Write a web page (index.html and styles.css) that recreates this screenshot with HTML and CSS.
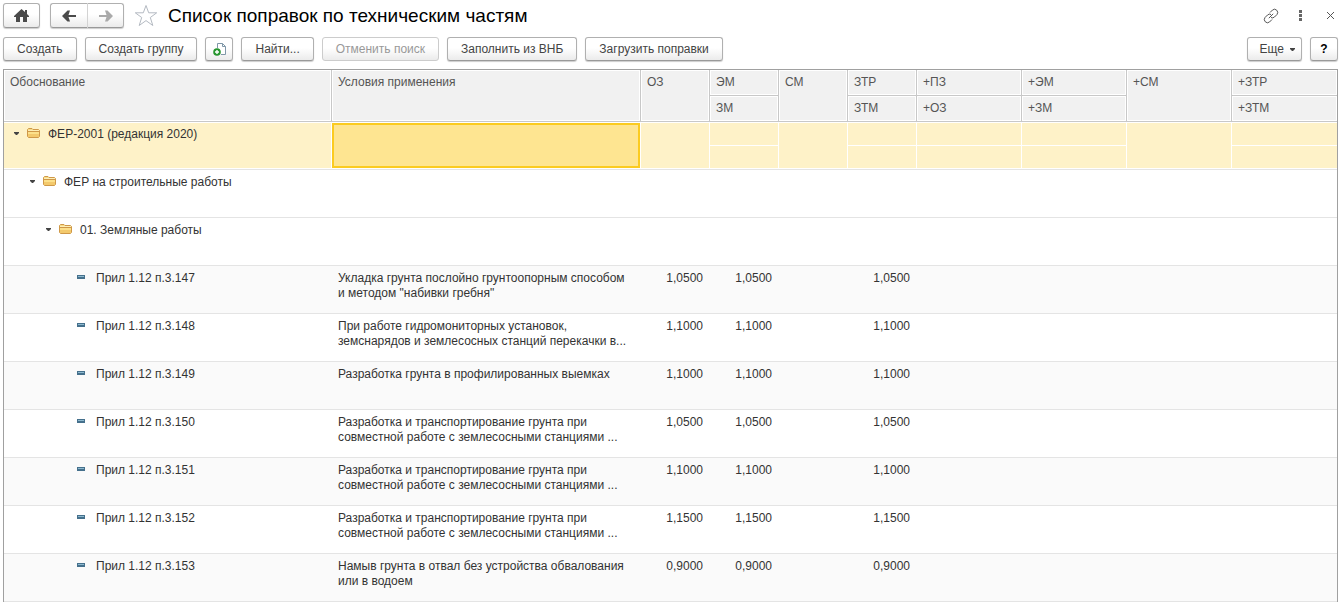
FILE: index.html
```html
<!DOCTYPE html>
<html lang="ru">
<head>
<meta charset="utf-8">
<title>Список поправок по техническим частям</title>
<link rel="stylesheet" href="styles.css">
</head>
<body>
<svg width="0" height="0" class="sprite" aria-hidden="true">
  <symbol id="folder" viewBox="0 0 13 11">
    <path d="M.5 9.500V2.500l1-1H5l1 1h5.500l1 1v6l-1 1h-10z" fill="#f8dc86" stroke="#cf9848"/>
    <path d="M1 4h11v1H1z" fill="#cf9848"/>
    <path d="M1 3h11v1H1z" fill="#fdeeb5"/>
    <path d="M1 5h11v2H1z" fill="#fce08a"/>
    <path d="M1 7h11v3H1z" fill="#f3c96c"/>
  </symbol>
  <symbol id="item" viewBox="0 0 8 4">
    <path d="M0 0h8v4H0z" fill="#45708c"/>
    <path d="M1 1h6v1H1z" fill="#8db9cf"/>
  </symbol>
  <symbol id="caret" viewBox="0 0 5 3"><path d="M0 0h5v1L3 3H2L0 1z" fill="#444"/></symbol>
</svg>

<header class="titlebar">
  <button class="btn nav" type="button" aria-label="Домой">
    <svg width="15" height="13" viewBox="0 0 15 13"><path d="M7.500 0 0 7v1h2v5h4V8h3v5h4V8h2V7l-2-2V1h-2v2z" fill="#4a4a4a"/></svg>
  </button>
  <div class="history">
    <button class="btn nav" type="button" aria-label="Назад">
      <svg width="14" height="12" viewBox="0 0 14 12"><path d="M0 6 5.500.5H8L6.500 5H14v2H6.500L8 11.500H5.500z" fill="#4a4a4a"/></svg>
    </button>
    <button class="btn nav" type="button" aria-label="Вперед">
      <svg width="14" height="12" viewBox="0 0 14 12"><path d="M14 6 8.500.5H6L7.500 5H0v2h7.500L6 11.500h2.500z" fill="#aaa"/></svg>
    </button>
  </div>
  <button class="icon" type="button" aria-label="В избранное">
    <svg width="24" height="23" viewBox="0 0 24 23"><path d="m12 1.500 2.700 7.300h8l-6.400 4.700 2.500 8-6.800-4.900-6.800 4.900 2.500-8-6.400-4.700h8z" fill="#fff" stroke="#b4bac2"/></svg>
  </button>
  <h1>Список поправок по техническим частям</h1>
  <div class="window-tools">
    <button class="icon link" type="button" aria-label="Ссылка">
      <svg width="16" height="16" viewBox="0 0 16 16"><path d="M7 4.500 9.500 2q2.200-1.800 4.200.2t.3 4.300L11.500 9q-1.800 1.600-3.500.5M9 11.500 6.500 14q-2.200 1.800-4.200-.2T2 9.500L4.500 7q1.800-1.600 3.500-.5M5.800 10.200l4.400-4.400" fill="none" stroke="#555"/></svg>
    </button>
    <button class="icon" type="button" aria-label="Меню">
      <svg width="3" height="11" viewBox="0 0 3 11"><path d="M0 0h3v3H0zM0 4h3v3H0zM0 8h3v3H0z" fill="#666"/></svg>
    </button>
    <button class="icon" type="button" aria-label="Закрыть">
      <svg width="7" height="7" viewBox="0 0 7 7"><path d="m0 0 7 7M7 0 0 7" stroke="#555"/></svg>
    </button>
  </div>
</header>

<div class="toolbar">
  <button class="btn" type="button">Создать</button>
  <button class="btn" type="button">Создать группу</button>
  <button class="btn square" type="button" aria-label="Создать копированием">
    <svg width="13" height="14" viewBox="0 0 13 14"><path d="M4.500 6V1.500h5l3 3v8H8M9.500 1.500v3h3" fill="#fff" stroke="#7f97a8"/><circle cx="4" cy="10" r="3.800" fill="#27962f"/><path d="M4 8v4M2 10h4" stroke="#fff" stroke-width="1.400"/></svg>
  </button>
  <button class="btn" type="button">Найти...</button>
  <button class="btn" type="button" disabled>Отменить поиск</button>
  <button class="btn" type="button">Заполнить из ВНБ</button>
  <button class="btn" type="button">Загрузить поправки</button>
  <button class="btn more" type="button">Еще <svg width="5" height="3"><use href="#caret"/></svg></button>
  <button class="btn square help" type="button">?</button>
</div>

<table class="grid">
  <colgroup>
    <col class="c-base"><col>
    <col class="c-num"><col class="c-num"><col class="c-num"><col class="c-num">
    <col class="c-add"><col class="c-add"><col class="c-add"><col class="c-add">
  </colgroup>
  <thead>
    <tr>
      <th rowspan="2">Обоснование</th><th rowspan="2">Условия применения</th><th rowspan="2">ОЗ</th><th>ЭМ</th><th rowspan="2">СМ</th><th>ЗТР</th><th>+ПЗ</th><th>+ЭМ</th><th rowspan="2">+СМ</th><th>+ЗТР</th>
    </tr>
    <tr><th>ЗМ</th><th>ЗТМ</th><th>+ОЗ</th><th>+ЗМ</th><th>+ЗТМ</th></tr>
  </thead>
  <tbody>
    <tr class="current">
      <td><div class="fill node"><svg class="caret" width="5" height="3"><use href="#caret"/></svg><svg width="13" height="11"><use href="#folder"/></svg>ФЕР-2001 (редакция 2020)</div></td>
      <td><div class="fill focus"></div></td>
      <td><div class="fill"></div></td>
      <td><div class="half"></div><div class="half"></div></td>
      <td><div class="fill"></div></td>
      <td><div class="half"></div><div class="half"></div></td>
      <td><div class="half"></div><div class="half"></div></td>
      <td><div class="half"></div><div class="half"></div></td>
      <td><div class="fill"></div></td>
      <td><div class="half"></div><div class="half"></div></td>
    </tr>
    <tr><td><div class="node level-2"><svg class="caret" width="5" height="3"><use href="#caret"/></svg><svg width="13" height="11"><use href="#folder"/></svg>ФЕР на строительные работы</div></td><td></td><td></td><td></td><td></td><td></td><td></td><td></td><td></td><td></td></tr>
    <tr><td><div class="node level-3"><svg class="caret" width="5" height="3"><use href="#caret"/></svg><svg width="13" height="11"><use href="#folder"/></svg>01. Земляные работы</div></td><td></td><td></td><td></td><td></td><td></td><td></td><td></td><td></td><td></td></tr>
    <tr class="alt"><td><div class="leaf"><svg width="8" height="4"><use href="#item"/></svg>Прил 1.12 п.3.147</div></td><td>Укладка грунта послойно грунтоопорным способом и методом "набивки гребня"</td><td class="num">1,0500</td><td class="num">1,0500</td><td></td><td class="num">1,0500</td><td></td><td></td><td></td><td></td></tr>
    <tr><td><div class="leaf"><svg width="8" height="4"><use href="#item"/></svg>Прил 1.12 п.3.148</div></td><td>При работе гидромониторных установок, земснарядов и землесосных станций перекачки в...</td><td class="num">1,1000</td><td class="num">1,1000</td><td></td><td class="num">1,1000</td><td></td><td></td><td></td><td></td></tr>
    <tr class="alt"><td><div class="leaf"><svg width="8" height="4"><use href="#item"/></svg>Прил 1.12 п.3.149</div></td><td>Разработка грунта в профилированных выемках</td><td class="num">1,1000</td><td class="num">1,1000</td><td></td><td class="num">1,1000</td><td></td><td></td><td></td><td></td></tr>
    <tr><td><div class="leaf"><svg width="8" height="4"><use href="#item"/></svg>Прил 1.12 п.3.150</div></td><td>Разработка и транспортирование грунта при совместной работе с землесосными станциями ...</td><td class="num">1,0500</td><td class="num">1,0500</td><td></td><td class="num">1,0500</td><td></td><td></td><td></td><td></td></tr>
    <tr class="alt"><td><div class="leaf"><svg width="8" height="4"><use href="#item"/></svg>Прил 1.12 п.3.151</div></td><td>Разработка и транспортирование грунта при совместной работе с землесосными станциями ...</td><td class="num">1,1000</td><td class="num">1,1000</td><td></td><td class="num">1,1000</td><td></td><td></td><td></td><td></td></tr>
    <tr><td><div class="leaf"><svg width="8" height="4"><use href="#item"/></svg>Прил 1.12 п.3.152</div></td><td>Разработка и транспортирование грунта при совместной работе с землесосными станциями ...</td><td class="num">1,1500</td><td class="num">1,1500</td><td></td><td class="num">1,1500</td><td></td><td></td><td></td><td></td></tr>
    <tr class="alt"><td><div class="leaf"><svg width="8" height="4"><use href="#item"/></svg>Прил 1.12 п.3.153</div></td><td>Намыв грунта в отвал без устройства обвалования или в водоем</td><td class="num">0,9000</td><td class="num">0,9000</td><td></td><td class="num">0,9000</td><td></td><td></td><td></td><td></td></tr>
  </tbody>
</table>
</body>
</html>
```
FILE: styles.css
```css
* { box-sizing: border-box; }

body {
  margin: 0;
  padding: 3px 5px 0 3px;
  background: #fff;
  color: #333;
  font: 12px/15px "Liberation Sans", Arial, sans-serif;
}

svg { display: block; flex: none; }
.sprite { position: absolute; }

.titlebar, .toolbar { display: flex; align-items: center; }
.titlebar { height: 25px; margin-bottom: 9px; }
.toolbar { height: 24px; margin-bottom: 8px; gap: 8px; }

h1 {
  margin: 0 auto 0 10px;
  color: #000;
  font-size: 19px;
  font-weight: 400;
  line-height: 24px;
}

.btn {
  display: flex;
  align-items: center;
  justify-content: center;
  height: 24px;
  padding: 0 13px;
  border: 1px solid #b0b0b0;
  border-bottom-color: #999;
  border-radius: 3px;
  background: linear-gradient(#fff 45%, #ebebeb);
  box-shadow: 0 1px 1px #ccc;
  color: #444;
  font: inherit;
  white-space: nowrap;
}
.btn:disabled { color: #999; border-color: #ccc; box-shadow: none; }
.nav { width: 37px; height: 25px; padding: 0; }
.square { width: 28px; padding: 0; }
.help { color: #000; font-weight: 700; }
.more { gap: 6px; margin-left: auto; padding: 0 6px 0 12px; }

.history { display: flex; margin: 0 10px; }
.history .btn:first-child { width: 38px; border-radius: 3px 0 0 3px; border-right-color: #d4d4d4; }
.history .btn:last-child { width: 36px; border-left: 0; border-radius: 0 3px 3px 0; }

.icon { padding: 0; border: 0; background: none; }
.window-tools { display: flex; align-items: center; gap: 25px; margin-right: 4px; }
.link { margin-right: -5px; }

.grid {
  width: 100%;
  border: 1px solid #a0a0a0;
  border-bottom: 0;
  border-spacing: 0;
  table-layout: fixed;
}
.c-base { width: 328px; }
.c-num { width: 69px; }
.c-add { width: 105px; }

th {
  height: 26px;
  padding: 5px 6px;
  border-right: 1px solid #c8c8c8;
  border-bottom: 1px solid #c8c8c8;
  background: #f1f1f1;
  box-shadow: inset 0 0 0 1px #fff;
  color: #555;
  font-weight: 400;
  text-align: left;
  vertical-align: top;
}
thead tr:first-child th:last-child, thead tr:last-child th:last-child { border-right: 0; }

td {
  height: 48px;
  padding: 5px 7px 0 6px;
  border-bottom: 1px solid #e4e4e4;
  vertical-align: top;
}
.alt td { background: #fafafa; }
.num { text-align: right; }

.current td { padding: 1px 1px 1px 0; }
.current td:last-child { padding-right: 0; }
.fill { height: 45px; background: #fef2c8; }
.half { height: 22px; background: #fef2c8; }
.half + .half { margin-top: 1px; }
.focus { border: 2px solid #fbcb20; background: #fee591; }

.node, .leaf { display: flex; align-items: flex-start; }
.node svg { margin: 0 8px 0 0; }
.node .caret { margin: 5px 8px 0 0; }
.current .node { padding: 4px 6px 0 10px; }
.level-2 { padding-left: 20px; }
.level-3 { padding-left: 36px; }
.leaf { padding-left: 67px; }
.leaf svg { margin: 4px 11px 0 0; }
```
